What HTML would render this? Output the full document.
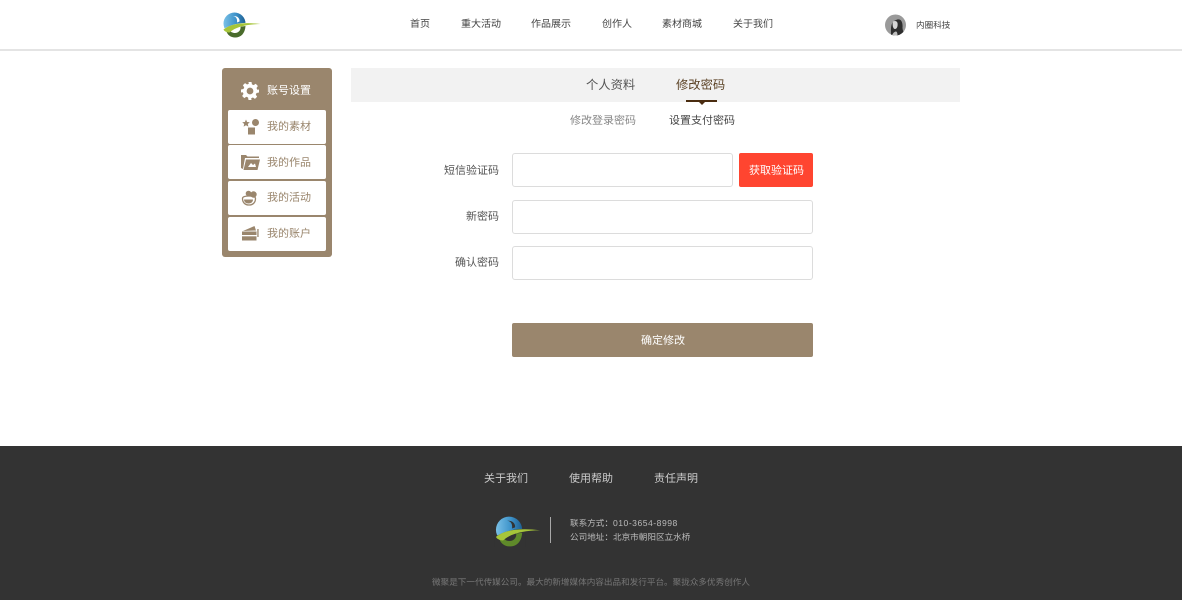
<!DOCTYPE html>
<html lang="zh"><head><meta charset="utf-8">
<style>
html,body{margin:0;padding:0}
body{width:1182px;height:600px;position:relative;overflow:hidden;background:#fff;font-family:"Liberation Sans","Noto Sans CJK SC",sans-serif;color:#333;text-rendering:geometricPrecision}
.t{position:absolute;white-space:nowrap;line-height:20px;font-weight:400}
.b{position:absolute;box-sizing:border-box}
.input{border:1px solid #dcdcdc;border-radius:3px;background:#fff}
.item{left:228px;width:98px;height:34px;background:#fff;border-radius:2px}
.side{font-size:11px;color:#9a866d;left:267px}
.nav{font-size:10px;color:#444;top:15px}
.lab{font-size:11px;color:#555;text-align:right;right:683px}
</style></head><body>
<div class="b" style="left:0;top:0;width:1182px;height:51px;background:#fff;border-bottom:2px solid #e4e4e4"></div>

<svg class="b" style="left:222px;top:12px" width="40" height="26" viewBox="0 0 40 26">
<defs><linearGradient id="g1" x1="0" y1="0" x2="1" y2="0"><stop offset="0" stop-color="#79c0e6"/><stop offset=".55" stop-color="#3f94cb"/><stop offset="1" stop-color="#1d5f92"/></linearGradient></defs>
<circle cx="12.500" cy="11.500" r="11" fill="url(#g1)"/>
<path d="M11 4c3 .5 4.500 2.500 4 6.500l2.500-1c.5-3-2-6-6.500-5.500z" fill="#fff"/>
<path d="M0 18C9 12 20 10.500 26 11V26H0z" fill="#fff"/>
<path d="M4 18c1 5 5 7.500 9 7.500 6 0 10-4 10.500-11.500l-5 .7c.5 3.300-2 6.300-5.500 6.300-2.500 0-4.500-1-5.500-3.500z" fill="#4a6b2c"/>
<path d="M1.500 17.500C9 11.500 22 10 38.500 12 25 12.300 14 14.500 7.500 20.500 5 20.500 2.500 19.500 1.500 17.500z" fill="#a6c53a"/>
</svg>

<div class="t nav" style="left:410px">首页</div>
<div class="t nav" style="left:461px">重大活动</div>
<div class="t nav" style="left:531px">作品展示</div>
<div class="t nav" style="left:602px">创作人</div>
<div class="t nav" style="left:662px">素材商城</div>
<div class="t nav" style="left:733px">关于我们</div>

<svg class="b" style="left:885px;top:14px" width="21" height="22" viewBox="0 0 21 21">
<defs><clipPath id="av"><circle cx="10.500" cy="10.500" r="10.500"/></clipPath></defs>
<g clip-path="url(#av)">
<rect width="21" height="21" fill="#9a9a9a"/>
<path d="M6 22c0-8-1-14 5-16.500C16 3 18 8 17.500 13c0 3 1.500 4.500 1.500 9z" fill="#2e2e2e"/>
<path d="M8 7c2-1 4-.5 4.500 1.500.5 3-.5 6-2.500 6-2 0-3-4-2-7.500z" fill="#d5d5d5"/>
<path d="M7 21c1-3 3-4 4-4s1.500 2 1.500 4z" fill="#bdbdbd"/>
</g></svg>
<div class="t" style="left:916px;top:15px;font-size:8.600px;color:#444">内圈科技</div>

<!-- sidebar -->
<div class="b" style="left:222px;top:68px;width:110px;height:189px;background:#9a866d;border-radius:3px"></div>
<svg class="b" style="left:241px;top:82px" width="18" height="18" viewBox="0 0 24 24"><path fill="#fff" fill-rule="evenodd" d="M10 0h4l.6 3.200 2.300 1 2.700-1.800 2.900 2.900-1.800 2.700 1 2.300L24 10v4l-3.300.6-1 2.300 1.800 2.700-2.900 2.900-2.700-1.800-2.300 1L14 24h-4l-.6-3.300-2.300-1-2.700 1.800-2.900-2.900 1.800-2.700-1-2.300L0 14v-4l3.300-.6 1-2.300-1.800-2.700 2.900-2.900 2.700 1.800 2.300-1zM12 7.500a4.500 4.500 0 1 0 0 9 4.500 4.500 0 0 0 0-9z"/></svg>
<div class="t" style="left:267px;top:81px;font-size:11px;color:#fff">账号设置</div>

<div class="b item" style="top:110px"></div>
<div class="b item" style="top:145px"></div>
<div class="b item" style="top:181px"></div>
<div class="b item" style="top:217px"></div>

<svg class="b" style="left:242px;top:119px" width="18" height="16" viewBox="0 0 18 16" fill="#9a866d">
<path d="M4 .5l1.100 2.500 2.700.2-2 1.800.6 2.600L4 6.300 1.600 7.600l.6-2.600-2-1.800 2.700-.2z"/><circle cx="13.500" cy="3.500" r="3.500"/><rect x="6" y="8.500" width="7" height="7"/></svg>
<div class="t side" style="top:117px">我的素材</div>

<svg class="b" style="left:241px;top:154px" width="19" height="16" viewBox="0 0 19 16" fill="#9a866d">
<path d="M0 1h5l1.500 1.500H18V4H4L2 15 0 14z"/><path d="M5 5.500h14L16.500 16H2.500z"/><path d="M7 13l3-4 2 2 2-1.500 1 3.500z" fill="#fff"/></svg>
<div class="t side" style="top:153px">我的作品</div>

<svg class="b" style="left:241px;top:190px" width="18" height="16" viewBox="0 0 18 16">
<path d="M1.500 8.500C1.500 6.500 4 6 8 6s6.500.5 6.500 2.500c0 4-2.500 6.500-6.500 6.500s-6.500-2.500-6.500-6.500z" fill="none" stroke="#9a866d" stroke-width="1.300"/>
<circle cx="7.500" cy="3.500" r="2.800" fill="#9a866d"/><circle cx="12.500" cy="4.500" r="3.200" fill="#9a866d"/><path d="M3 9.500h9c0 2.500-2 4-4.500 4S3 12 3 9.500z" fill="#9a866d"/></svg>
<div class="t side" style="top:188px">我的活动</div>

<svg class="b" style="left:241px;top:226px" width="18" height="15" viewBox="0 0 18 15" fill="#9a866d">
<path d="M2 5L13.500 0l1.500 4.500z"/><path d="M1 5.500h14.500v9H1z"/><rect x="1" y="9" width="14.500" height="1.300" fill="#fff"/><rect x="16.300" y="3" width="1.300" height="8"/></svg>
<div class="t side" style="top:224px">我的账户</div>

<!-- tabs -->
<div class="b" style="left:351px;top:68px;width:609px;height:34px;background:#f2f2f2"></div>
<div class="t" style="left:586px;top:75px;font-size:12.300px;color:#555">个人资料</div>
<div class="t" style="left:676px;top:75px;font-size:12.300px;color:#5c4326">修改密码</div>
<div class="b" style="left:686px;top:100px;width:31px;height:2px;background:#4a2c10"></div>
<div class="b" style="left:699px;top:102px;width:0;height:0;border-left:3px solid transparent;border-right:3px solid transparent;border-top:3px solid #4a2c10"></div>
<div class="t" style="left:570px;top:111px;font-size:11px;color:#888">修改登录密码</div>
<div class="t" style="left:669px;top:111px;font-size:11px;color:#444">设置支付密码</div>

<!-- form -->
<div class="t lab" style="top:161px">短信验证码</div>
<div class="b input" style="left:512px;top:153px;width:221px;height:34px"></div>
<div class="b" style="left:739px;top:153px;width:74px;height:34px;background:#ff4530;border-radius:2px"></div>
<div class="t" style="left:749px;top:161px;font-size:11px;color:#fff">获取验证码</div>
<div class="t lab" style="top:207px">新密码</div>
<div class="b input" style="left:512px;top:200px;width:301px;height:34px"></div>
<div class="t lab" style="top:253px">确认密码</div>
<div class="b input" style="left:512px;top:246px;width:301px;height:34px"></div>
<div class="b" style="left:512px;top:323px;width:301px;height:34px;background:#9a866d;border-radius:2px"></div>
<div class="t" style="left:641px;top:331px;font-size:11px;color:#fff">确定修改</div>

<!-- footer -->
<div class="b" style="left:0;top:446px;width:1182px;height:154px;background:#333"></div>
<div class="t" style="left:484px;top:469px;font-size:11px;color:#ccc">关于我们</div>
<div class="t" style="left:569px;top:469px;font-size:11px;color:#ccc">使用帮助</div>
<div class="t" style="left:654px;top:469px;font-size:11px;color:#ccc">责任声明</div>

<svg class="b" style="left:494px;top:516px" width="48" height="31" viewBox="0 0 40 26">
<defs><linearGradient id="g2" x1="0" y1="0" x2="1" y2="0"><stop offset="0" stop-color="#79c0e6"/><stop offset=".55" stop-color="#3f94cb"/><stop offset="1" stop-color="#1d5f92"/></linearGradient></defs>
<circle cx="12.500" cy="11.500" r="11" fill="url(#g2)"/>
<path d="M11 4c3 .5 4.500 2.500 4 6.500l2.500-1c.5-3-2-6-6.500-5.500z" fill="#333"/>
<path d="M0 18C9 12 20 10.500 26 11V26H0z" fill="#333"/>
<path d="M4 18c1 5 5 7.500 9 7.500 6 0 10-4 10.500-11.500l-5 .7c.5 3.300-2 6.300-5.500 6.300-2.500 0-4.500-1-5.500-3.500z" fill="#5f8a2a"/>
<path d="M1.500 17.500C9 11.500 22 10 38.500 12 25 12.300 14 14.500 7.500 20.500 5 20.500 2.500 19.500 1.500 17.500z" fill="#a6c53a"/>
</svg>
<div class="b" style="left:550px;top:517px;width:1px;height:26px;background:#a8a8a8"></div>
<div class="t" style="left:570px;top:513px;font-size:8.600px;color:#bbb">联系方式：<span style="letter-spacing:.5px">010-3654-8998</span></div>
<div class="t" style="left:570px;top:527px;font-size:8.600px;color:#bbb">公司地址：北京市朝阳区立水桥</div>
<div class="t" style="left:432px;top:572px;font-size:8.600px;color:#777">微聚是下一代传媒公司。最大的新增媒体内容出品和发行平台。聚拢众多优秀创作人</div>
</body></html>
